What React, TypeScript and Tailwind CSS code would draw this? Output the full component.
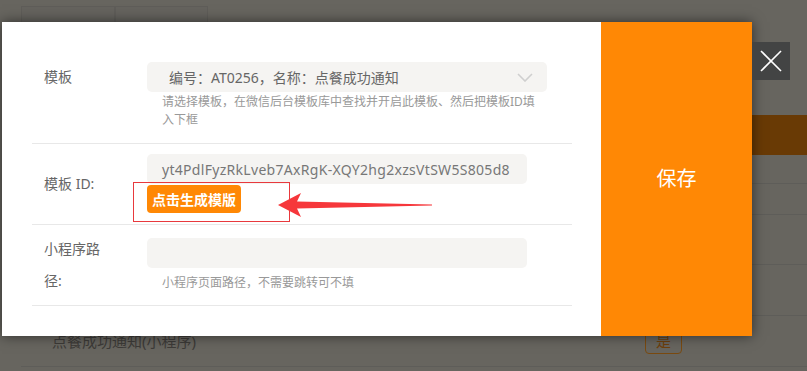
import React from 'react';

const font = '"Noto Sans", "Noto Sans CJK SC", sans-serif';

function Backdrop() {
  return (
    <div className="flex flex-col pl-[21px] pt-[6px]">
      {/* 表头 */}
      <div className="flex h-[109px]">
        <div className="w-[94px] h-[60px] border border-[#5f5d59] bg-[#65635e] pl-[21px] pt-[13px] text-[15px] text-[#3d3b38]">
          模板标题
        </div>
        <div className="w-[93px] h-[60px] border border-[#5f5d59] bg-[#65635e] pl-[21px] pt-[13px] text-[15px] text-[#6a3c1a]">
          模板编号
        </div>
      </div>
      <div className="h-[40px] bg-[#693a05]" />
      <div className="h-[29px] border-b border-[#5e5d59]" />
      <div className="h-[31px] border-b border-[#5e5d59]" />
      <div className="h-[50px] border-b border-[#5e5d59]" />
      <div className="h-[51px] border-b border-[#5e5d59]" />
      <div className="h-[51px] border-b border-[#5e5d59] flex items-center">
        <span className="pl-[31px] w-[624px] text-[15px] text-[#3d3b38]">点餐成功通知(小程序)</span>
        <span className="w-[37px] h-[26px] flex items-center justify-center rounded-[4px] border border-[#7a4a10] text-[15px] text-[#6e3f0c]">
          是
        </span>
      </div>
    </div>
  );
}

function Label({ children }: { children: React.ReactNode }) {
  return (
    <div className="w-[115px] pl-[12px] shrink-0 -my-[6px]">
      <div className="w-[60px] text-[14px] leading-[32px] text-[#666]">{children}</div>
    </div>
  );
}

export default function App() {
  return (
    <div className="relative w-[807px] h-[371px] overflow-hidden bg-[#67655f]" style={{ fontFamily: font }}>
      <Backdrop />

      {/* 弹窗 */}
      <div className="absolute left-[2px] top-[22px] w-[750px] h-[314px] flex bg-white shadow-[0_0_12px_rgba(0,0,0,0.55)]">
        <div className="w-[599px] pl-[30px]">
          <div className="w-[540px] flex flex-col">
            {/* 模板 */}
            <div className="flex pt-[40px] pb-[14px] border-b border-[#e8e8e8]">
              <div className="w-[115px] pl-[12px] shrink-0 text-[14px] leading-[30px] text-[#666]">模板</div>
              <div className="flex flex-col">
                <div className="w-[400px] h-[30px] rounded-[5px] bg-[#f5f4f2] flex items-center justify-between pl-[22px] pr-[14px]">
                  <span className="text-[14px] text-[#666]">编号：AT0256，名称：点餐成功通知</span>
                  <svg width="16" height="9" viewBox="0 0 16 9">
                    <polyline points="1,1 8,8 15,1" fill="none" stroke="#cfcfcf" strokeWidth="1.6" />
                  </svg>
                </div>
                <p className="w-[376px] mt-[1px] pl-[15px] box-content text-[12px] leading-[18px] text-[#999]">
                  请选择模板，在微信后台模板库中查找并开启此模板、然后把模板ID填入下框
                </p>
              </div>
            </div>

            {/* 模板 ID */}
            <div className="flex items-center pt-[10px] pb-[11px] border-b border-[#e8e8e8]">
              <Label>模板 ID:</Label>
              <div className="flex flex-col">
                <div className="w-[380px] h-[30px] rounded-[5px] bg-[#f5f4f2] flex items-center pl-[15px]">
                  <span className="text-[14px] tracking-[0.3px] text-[#777]">yt4PdlFyzRkLveb7AxRgK-XQY2hg2xzsVtSW5S805d8</span>
                </div>
                <button className="mt-[1px] w-[94px] h-[28px] rounded-[4px] bg-[#ff8805] text-white text-[14px] font-bold">
                  点击生成模版
                </button>
              </div>
            </div>

            {/* 小程序路径 */}
            <div className="flex items-center pt-[13px] pb-[13px] border-b border-[#e8e8e8]">
              <Label>小程序路径:</Label>
              <div className="flex flex-col">
                <div className="w-[380px] h-[30px] rounded-[5px] bg-[#f5f4f2]" />
                <p className="mt-[6px] pl-[15px] text-[12px] leading-[18px] text-[#999]">小程序页面路径，不需要跳转可不填</p>
              </div>
            </div>
          </div>
        </div>
        <div className="w-[151px] bg-[#ff8805] flex items-center justify-center">
          <span className="text-[20px] text-white">保存</span>
        </div>
      </div>

      {/* 关闭按钮 */}
      <div className="absolute left-[752px] top-[42px] w-[38px] h-[38px] bg-[#434444] flex items-center justify-center">
        <svg width="22" height="22" viewBox="0 0 22 22">
          <line x1="1" y1="1" x2="21" y2="21" stroke="#fff" strokeWidth="1.6" />
          <line x1="21" y1="1" x2="1" y2="21" stroke="#fff" strokeWidth="1.6" />
        </svg>
      </div>

      {/* 标注 */}
      <div className="absolute left-[133px] top-[182px] w-[157px] h-[40px] border border-[#e8393d]" />
      <svg className="absolute left-[276px] top-[190px]" width="160" height="30" viewBox="0 0 160 30">
        <polygon
          points="2,15 25,3 21,11.5 156,14.6 156,15.4 21,18.5 25,27"
          fill="#f6373b"
        />
      </svg>
    </div>
  );
}
